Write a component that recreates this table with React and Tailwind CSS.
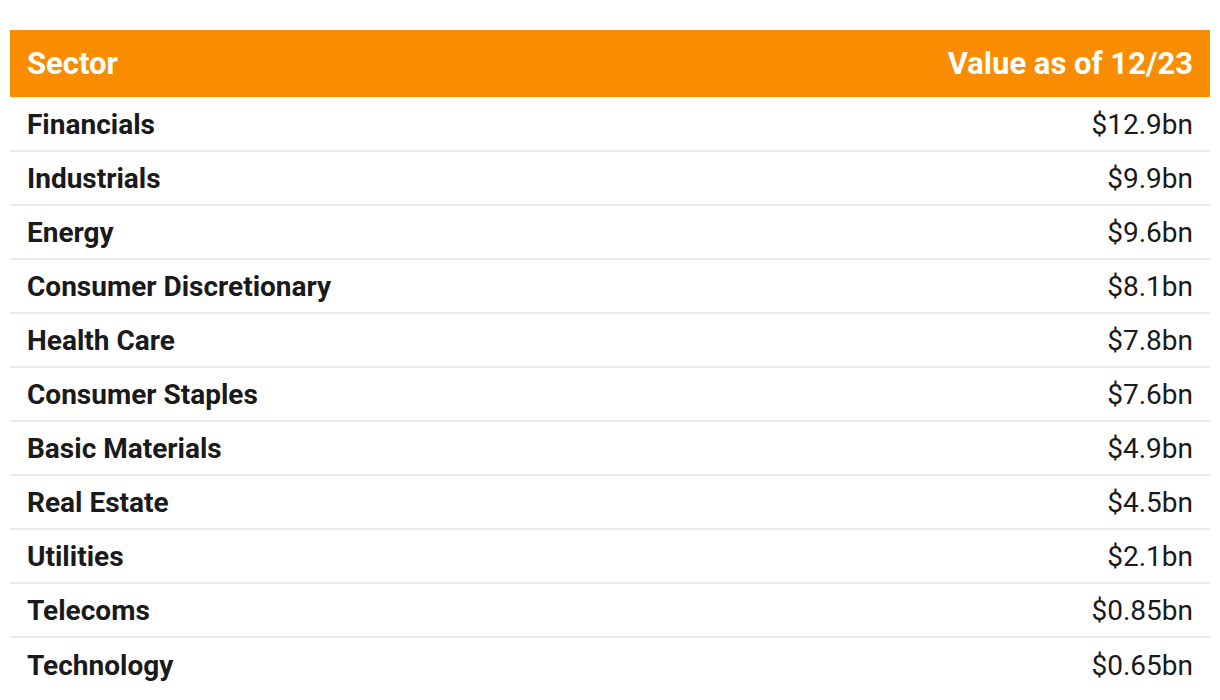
const ROWS = [
  ['Financials', '$12.9bn'],
  ['Industrials', '$9.9bn'],
  ['Energy', '$9.6bn'],
  ['Consumer Discretionary', '$8.1bn'],
  ['Health Care', '$7.8bn'],
  ['Consumer Staples', '$7.6bn'],
  ['Basic Materials', '$4.9bn'],
  ['Real Estate', '$4.5bn'],
  ['Utilities', '$2.1bn'],
  ['Telecoms', '$0.85bn'],
  ['Technology', '$0.65bn'],
];

export default function App() {
  return (
    <div className="bg-white min-h-[700px] pt-[30px] px-[10px] font-['Roboto',sans-serif] text-[#1a1a1a]">
      <table className="w-full border-collapse">
        <thead>
          <tr className="bg-[#f98c00] text-white h-[67px]">
            <th className="pl-[17px] text-left text-[31px] font-bold leading-none">Sector</th>
            <th className="pr-[17px] text-right text-[31px] font-bold leading-none">Value as of 12/23</th>
          </tr>
        </thead>
        <tbody>
          {ROWS.map(([sector, value], i) => (
            <tr key={sector} className={`h-[54px] ${i < ROWS.length - 1 ? 'border-b-2 border-[#ebebeb]' : ''}`}>
              <td className="pl-[17px] pt-[2px] text-[28px] font-bold leading-none">{sector}</td>
              <td className="pr-[17px] pt-[2px] text-right text-[28px] leading-none">{value}</td>
            </tr>
          ))}
        </tbody>
      </table>
    </div>
  );
}
